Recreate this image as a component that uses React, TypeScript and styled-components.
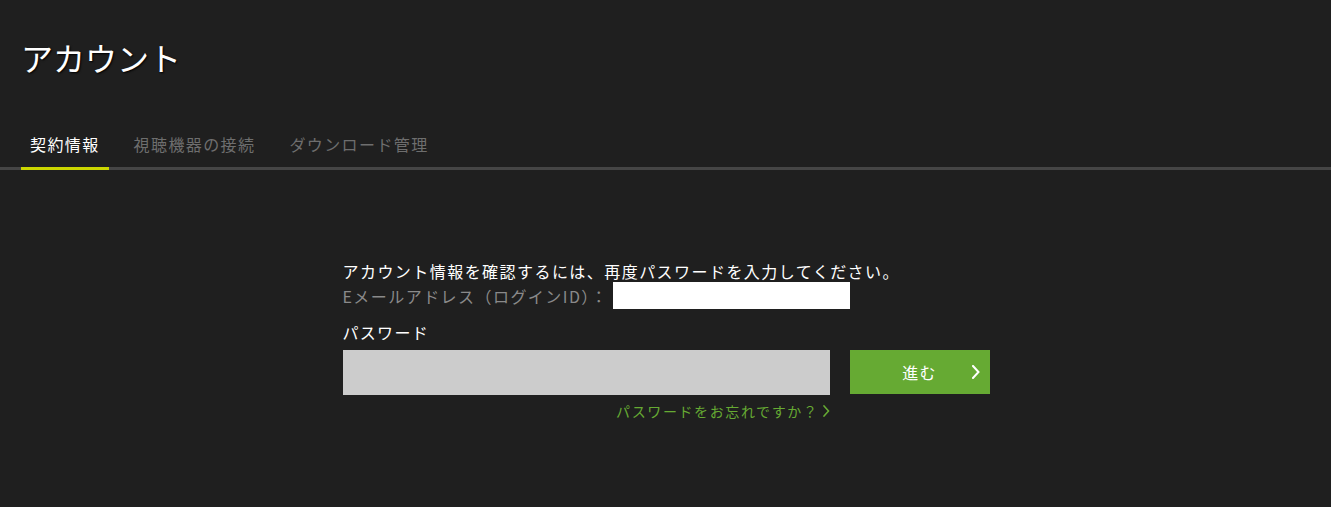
import React, { useState } from "react";
import styled, { createGlobalStyle } from "styled-components";

const GlobalStyle = createGlobalStyle`
  html, body {
    margin: 0;
    padding: 0;
    background: #1f1f1f;
  }
  body {
    font-family: "Noto Sans CJK JP", "Noto Sans", sans-serif;
    color: #ffffff;
  }
`;

const Page = styled.div`
  min-height: 507px;
  background: #1f1f1f;
`;

const Header = styled.header`
  padding: 37px 0 0 21px;
`;

const Title = styled.h1`
  margin: 0;
  font-size: 32px;
  line-height: 40px;
  font-weight: 400;
  color: #ffffff;
  text-shadow: 1px 1px 2px #000;
`;

const Tabs = styled.nav`
  display: flex;
  gap: 16px;
  margin-top: 55px;
  padding-left: 21px;
  border-bottom: 3px solid #454545;
`;

const Tab = styled.button<{ $active?: boolean }>`
  margin: 0 0 -3px;
  padding: 0 9px 11px;
  border: 0;
  border-bottom: 3px solid ${(p) => (p.$active ? "#cbd600" : "transparent")};
  background: none;
  font-family: inherit;
  font-size: 16px;
  line-height: 24px;
  letter-spacing: 1.4px;
  color: ${(p) => (p.$active ? "#ffffff" : "#6e6e6e")};
  cursor: pointer;
`;

const Content = styled.section`
  width: 648px;
  margin: 91px auto 0;
  padding-left: 1px;
  box-sizing: border-box;
`;

const Lead = styled.p`
  margin: 0;
  font-size: 16px;
  line-height: 21px;
  letter-spacing: 1.45px;
  color: #ffffff;
`;

const EmailRow = styled.div`
  display: flex;
  align-items: center;
  height: 27px;
  font-size: 16px;
  letter-spacing: 1.45px;
  color: #8a8a8a;
`;

const EmailMask = styled.span`
  display: block;
  width: 237px;
  height: 27px;
  margin-left: 5px;
  background: #ffffff;
`;

const Label = styled.label`
  display: block;
  margin-top: 11px;
  font-size: 16px;
  line-height: 24px;
  letter-spacing: 1.3px;
  color: #ffffff;
`;

const FormRow = styled.div`
  display: flex;
  align-items: flex-start;
  gap: 20px;
  margin-top: 6px;
`;

const PasswordInput = styled.input`
  width: 487px;
  height: 45px;
  box-sizing: border-box;
  border: 0;
  padding: 0 12px;
  background: #cccccc;
  font-size: 16px;
  outline: none;
`;

const SubmitButton = styled.button`
  position: relative;
  width: 140px;
  height: 44px;
  border: 0;
  background: #66aa33;
  color: #ffffff;
  font-family: inherit;
  font-size: 16px;
  letter-spacing: 1.2px;
  cursor: pointer;

  svg {
    position: absolute;
    right: 10px;
    top: 15px;
  }
`;

const ForgotRow = styled.div`
  display: flex;
  justify-content: flex-end;
  width: 487px;
  margin-top: 5px;
`;

const ForgotLink = styled.a`
  display: flex;
  align-items: center;
  gap: 4px;
  font-size: 14px;
  line-height: 22px;
  letter-spacing: 1.6px;
  color: #66aa33;
  text-decoration: none;
  cursor: pointer;
`;

const Chevron = ({ w, h, color, sw }: { w: number; h: number; color: string; sw: number }) => (
  <svg width={w} height={h} viewBox={`0 0 ${w} ${h}`} fill="none">
    <path
      d={`M1 1 L${w - 1.5} ${h / 2} L1 ${h - 1}`}
      stroke={color}
      strokeWidth={sw}
      strokeLinecap="square"
    />
  </svg>
);

export default function App() {
  const [tab, setTab] = useState(0);
  const tabs = ["契約情報", "視聴機器の接続", "ダウンロード管理"];

  return (
    <Page>
      <GlobalStyle />
      <Header>
        <Title>アカウント</Title>
      </Header>
      <Tabs>
        {tabs.map((t, i) => (
          <Tab key={t} $active={tab === i} onClick={() => setTab(i)}>
            {t}
          </Tab>
        ))}
      </Tabs>
      <Content>
        <Lead>アカウント情報を確認するには、再度パスワードを入力してください。</Lead>
        <EmailRow>
          Eメールアドレス（ログインID）：
          <EmailMask />
        </EmailRow>
        <Label htmlFor="pw">パスワード</Label>
        <FormRow>
          <PasswordInput id="pw" type="password" />
          <SubmitButton>
            進む
            <Chevron w={8} h={14} color="#ffffff" sw={2} />
          </SubmitButton>
        </FormRow>
        <ForgotRow>
          <ForgotLink>
            パスワードをお忘れですか？
            <Chevron w={7} h={12} color="#66aa33" sw={1.6} />
          </ForgotLink>
        </ForgotRow>
      </Content>
    </Page>
  );
}
